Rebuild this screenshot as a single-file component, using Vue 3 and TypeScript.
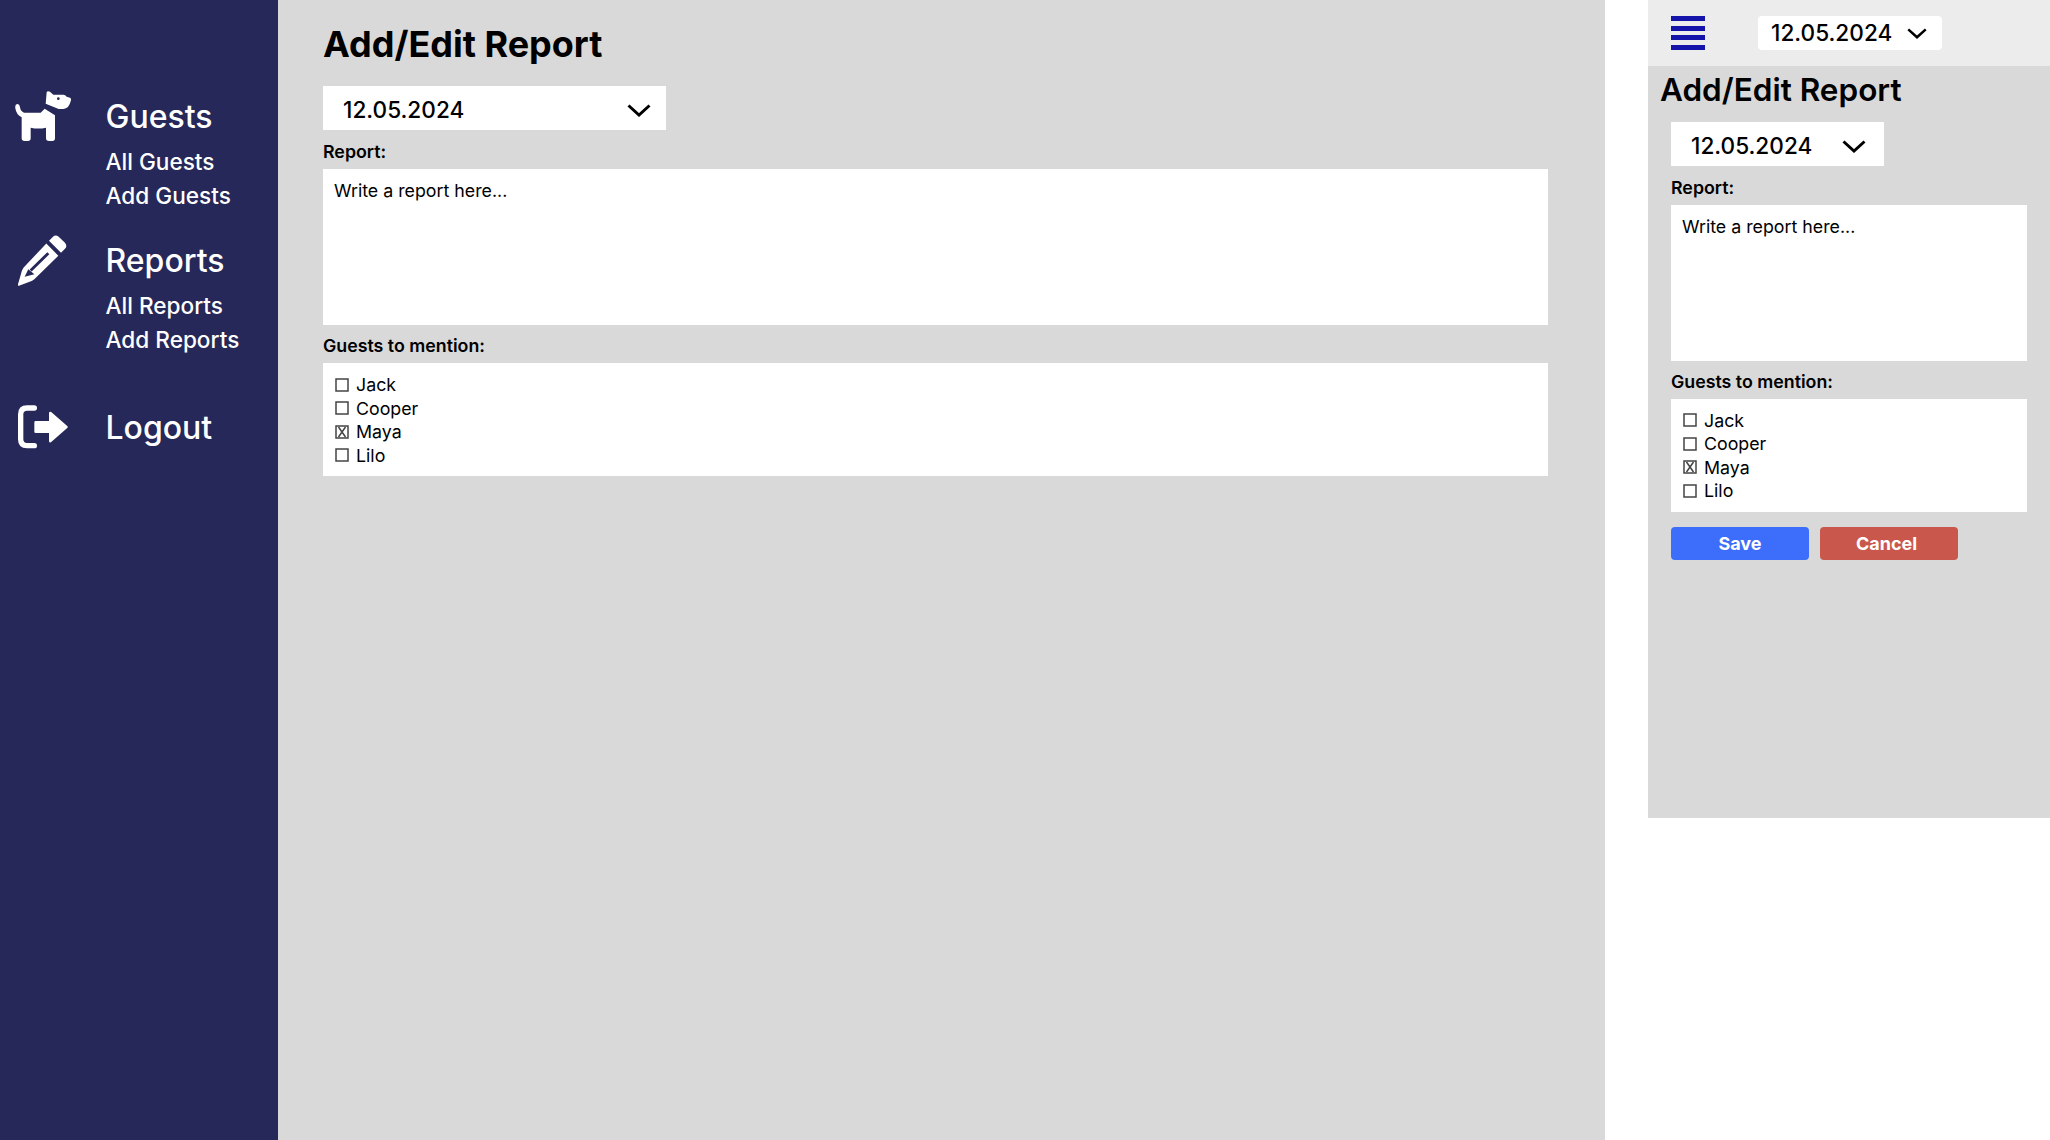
<script setup lang="ts">
interface Guest { name: string; checked: boolean }
const guests: Guest[] = [
  { name: 'Jack', checked: false },
  { name: 'Cooper', checked: false },
  { name: 'Maya', checked: true },
  { name: 'Lilo', checked: false },
]
</script>

<template>
  <div class="page">
    <aside class="sidebar">
      <section class="nav-group guests-group">
        <svg class="nav-icon dog" viewBox="45 93 168 150" aria-hidden="true">
          <path fill="#fff" d="M140 97 Q142 91 150 95 L160 104 H190 Q196 104 200 110 L210 113 Q215 116 212 124 Q207 146 190 147 H176 L137 131 Z" />
          <path fill="#fff" d="M72 158 H122 L134 146 L165 166 V235 Q165 243 157 243 H147 Q138 243 138 235 V203 Q115 208 92 203 V235 Q92 243 84 243 H74 Q65 243 65 235 V172 Q49 165 46 145 Q44 133 52 132 Q58 132 60 142 Q62 155 72 158 Z" />
          <circle fill="#252858" cx="175" cy="116" r="4" />
        </svg>
        <div class="nav-text">
          <h2>Guests</h2>
          <a>All Guests</a>
          <a>Add Guests</a>
        </div>
      </section>
      <section class="nav-group reports-group">
        <svg class="nav-icon pencil" viewBox="55 523 150 152" aria-hidden="true">
          <path fill="#fff" d="M148 540 L160 528 Q168 520 177 528 L196 546 Q204 556 196 564 L184 576 Z" />
          <path fill="#fff" fill-rule="evenodd" d="M140 548 L176 585 L104 655 Q98 660 90 663 L58 675 Q53 675 55 670 L66 632 Q68 626 72 620 Z M143 574 L149 580 L96 632 L90 626 Z M75 648 L86 625 L104 640 Z" />
        </svg>
        <div class="nav-text">
          <h2>Reports</h2>
          <a>All Reports</a>
          <a>Add Reports</a>
        </div>
      </section>
      <section class="nav-group logout-group">
        <svg class="nav-icon logout" viewBox="55 1036 150 132" aria-hidden="true">
          <path fill="none" stroke="#fff" stroke-width="16" stroke-linecap="round" d="M104 1045 H82 Q63 1045 63 1064 V1139 Q63 1158 82 1158 H104" />
          <path fill="#fff" stroke="#fff" stroke-width="8" stroke-linejoin="round" d="M108 1088 H152 V1060 L200 1102 L152 1144 V1116 H108 Z" />
        </svg>
        <div class="nav-text"><h2>Logout</h2></div>
      </section>
    </aside>

    <main class="desktop">
      <h1>Add/Edit Report</h1>
      <div class="select select-desktop">
        <span>12.05.2024</span>
        <svg class="chevron" viewBox="0 0 24 13" aria-hidden="true"><path d="M1.5 1.5 L12 11 L22.5 1.5" /></svg>
      </div>
      <label class="field-label report-label">Report:</label>
      <div class="report-box">Write a report here...</div>
      <label class="field-label guests-label">Guests to mention:</label>
      <ul class="guest-box">
        <li v-for="g in guests" :key="g.name">
          <svg class="check" viewBox="0 0 14 14" aria-hidden="true">
            <rect x="1" y="1" width="12" height="12" />
            <path v-if="g.checked" d="M3.5 2 L10.5 12 M10.5 2 L3.5 12" />
          </svg>
          {{ g.name }}
        </li>
      </ul>
    </main>

    <section class="phone">
      <header class="phone-bar">
        <div class="burger" aria-hidden="true"><i></i><i></i><i></i><i></i></div>
        <div class="select select-bar">
          <span>12.05.2024</span>
          <svg class="chevron" viewBox="0 0 24 13" aria-hidden="true"><path d="M1.5 1.5 L12 11 L22.5 1.5" /></svg>
        </div>
      </header>
      <div class="phone-body">
        <h1>Add/Edit Report</h1>
        <div class="phone-form">
          <div class="select select-phone">
            <span>12.05.2024</span>
            <svg class="chevron" viewBox="0 0 24 13" aria-hidden="true"><path d="M1.5 1.5 L12 11 L22.5 1.5" /></svg>
          </div>
          <label class="field-label report-label phone-report">Report:</label>
          <div class="report-box">Write a report here...</div>
          <label class="field-label guests-label">Guests to mention:</label>
          <ul class="guest-box">
            <li v-for="g in guests" :key="g.name">
              <svg class="check" viewBox="0 0 14 14" aria-hidden="true">
                <rect x="1" y="1" width="12" height="12" />
                <path v-if="g.checked" d="M3.5 2 L10.5 12 M10.5 2 L3.5 12" />
              </svg>
              {{ g.name }}
            </li>
          </ul>
          <div class="actions">
            <button class="save" type="button">Save</button>
            <button class="cancel" type="button">Cancel</button>
          </div>
        </div>
      </div>
    </section>
  </div>
</template>

<style>
html, body { margin: 0; background: #fff; }
</style>

<style scoped>
* { box-sizing: border-box; }
.page {
  display: flex;
  width: 2050px;
  height: 1140px;
  overflow: hidden;
  align-items: flex-start;
  font-family: Inter, "Liberation Sans", sans-serif;
  color: #000;
  background: #fff;
}
.sidebar {
  width: 278px;
  height: 1140px;
  flex: none;
  background: #252858;
  color: #fff;
  position: relative;
}
.nav-group { display: flex; position: relative; padding-left: 105.5px; }
.guests-group { padding-top: 97px; height: 207px; }
.reports-group { padding-top: 34px; height: 166px; }
.logout-group { padding-top: 35px; }
.nav-icon { position: absolute; display: block; }
.dog { left: 15px; top: 91px; width: 56px; height: 50px; }
.pencil { left: 18px; top: 28px; width: 50px; height: 51px; }
.logout { left: 18px; top: 32px; width: 50px; height: 44px; }
.nav-text { display: flex; flex-direction: column; }
.nav-text h2 { margin: 0; font-size: 32px; line-height: 40px; font-weight: 500; }
.nav-text a { font-size: 22.6px; line-height: 34px; font-weight: 500; }
.nav-text h2 + a { margin-top: 8px; }

.desktop {
  width: 1327px;
  height: 1140px;
  flex: none;
  background: #d9d9d9;
  padding: 22px 57px 0 45px;
}
.desktop h1 {
  margin: 0 0 20px;
  font-size: 36px;
  line-height: 44px;
  font-weight: 700;
}
.select {
  display: flex;
  align-items: center;
  justify-content: space-between;
  background: #fff;
  font-size: 22.6px;
  font-weight: 500;
  height: 44px;
}
.select-desktop span, .select-phone span { position: relative; top: 1px; }
.select-bar span { position: relative; top: -1px; }
.select-desktop { width: 343px; padding: 0 15px 0 20px; }
.chevron { width: 24px; height: 13px; flex: none; fill: none; stroke: #000; stroke-width: 3; }
.select-desktop .chevron, .select-phone .chevron { margin-top: 4px; }
.field-label { display: block; font-size: 17.8px; line-height: 22px; font-weight: 600; }
.report-label { margin-top: 11px; }
.report-box {
  background: #fff;
  height: 156px;
  margin-top: 6px;
  padding: 11px;
  font-size: 17.8px;
  line-height: 22px;
}
.guests-label { margin-top: 10px; }
.guest-box {
  list-style: none;
  margin: 6px 0 0;
  padding: 10px 12px;
  background: #fff;
  height: 113px;
  font-size: 17.8px;
  line-height: 23.5px;
}
.guest-box li { display: flex; align-items: center; gap: 7px; }
.check { width: 14px; height: 14px; flex: none; fill: none; stroke: #444; stroke-width: 1.5; }

.phone {
  width: 402px;
  flex: none;
  margin-left: 43px;
  height: 818px;
  background: #d9d9d9;
}
.phone-bar {
  height: 66px;
  background: #ececec;
  display: flex;
  align-items: center;
  padding-left: 23px;
  gap: 53px;
}
.burger { width: 34px; height: 34px; display: flex; flex-direction: column; justify-content: space-between; }
.burger i { display: block; height: 5px; background: #1414aa; }
.select-bar { width: 184px; height: 34px; border-radius: 4px; padding: 0 15px 0 13px; }
.select-bar .chevron { width: 20px; height: 11px; }
.phone-body { padding: 4px 23px 0 12px; }
.phone-body h1 { margin: 0 0 12px; font-size: 31.5px; line-height: 40px; font-weight: 600; }
.phone-form { padding-left: 11px; }
.select-phone { width: 213px; padding: 0 18px 0 20px; }
.phone-report { margin-top: 10.5px; }
.actions { display: flex; gap: 11px; margin-top: 15.5px; }
.actions button {
  width: 138px;
  height: 33px;
  border: 0;
  border-radius: 4px;
  color: #fff;
  font: 700 18px/33px Inter, "Liberation Sans", sans-serif;
  padding: 0;
}
.save { background: #3d6dfb; }
.actions .cancel { background: #c9574c; padding-right: 5px; }
</style>
